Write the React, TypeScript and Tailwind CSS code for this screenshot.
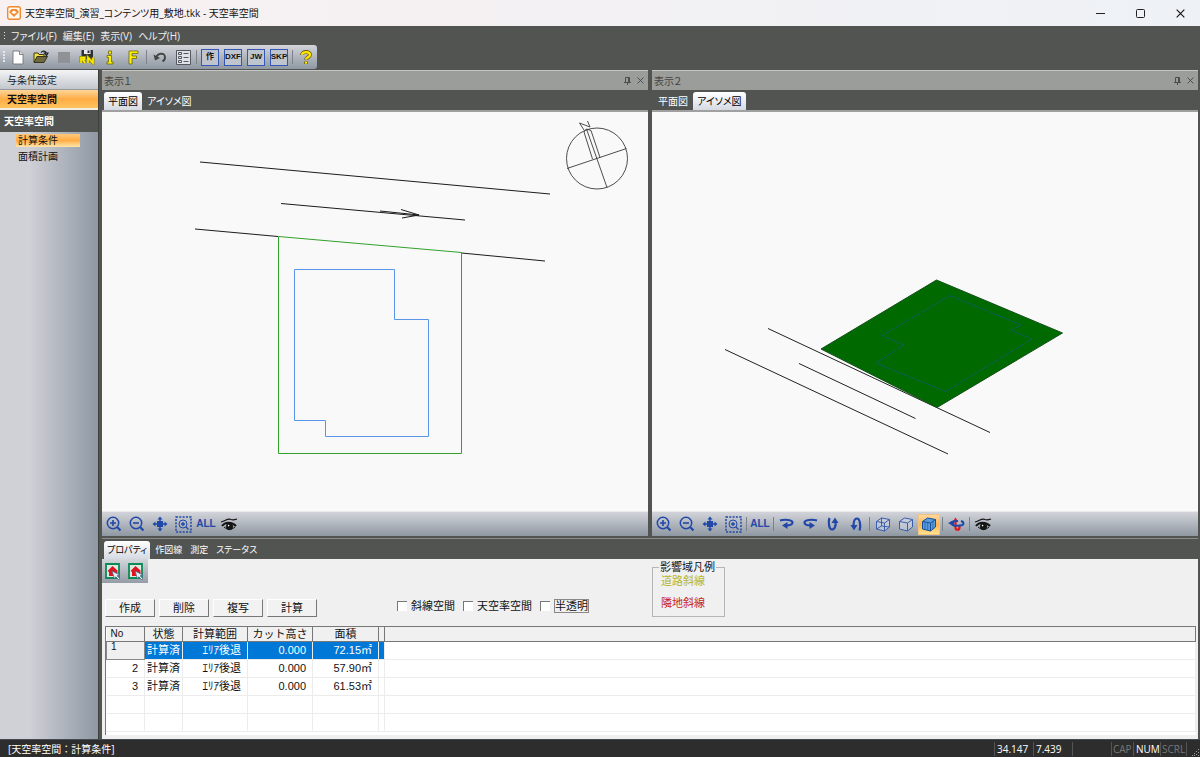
import React, { useState } from 'react';

interface ToolButtonProps {
  label: string;
  active?: boolean;
  disabled?: boolean;
  children: React.ReactNode;
}

const ToolButton: React.FC<ToolButtonProps> = ({ label, active, disabled, children }) => (
  <button
    type="button"
    aria-label={label}
    title={label}
    disabled={disabled}
    className={`flex h-[21px] w-[22px] shrink-0 items-center justify-center ${
      active ? 'border border-[#f3c27c] bg-linear-to-b from-[#ffd9a0] via-[#ffb24d] to-[#ffe38f]' : ''
    }`}
  >
    {children}
  </button>
);

const Separator = () => <span className="mx-px h-[14px] w-px shrink-0 bg-[#7d828a]" />;

const Grip = () => (
  <svg className="shrink-0" width="4" height="14" viewBox="0 0 4 14" fill="#e4e6ea">
    <path d="M1 1h2v2H1zM1 4h2v2H1zM1 7h2v2H1zM1 10h2v2H1z" />
  </svg>
);

/* ---------- icons ---------- */

const AppIcon = () => (
  <svg width="14" height="14" viewBox="0 0 14 14">
    <rect x="0.7" y="0.7" width="12.6" height="12.6" rx="2" fill="#fff8f0" stroke="#f08a2c" strokeWidth="1.4" />
    <path d="M2 6l2.5-3h5L12 6l-5 5z" fill="#f08a2c" />
    <path d="M4.2 6.3L7 4.6l2.8 1.7L7 8.2z" fill="#fff8f0" />
  </svg>
);

const NewIcon = () => (
  <svg width="12" height="15" viewBox="0 0 12 15">
    <path d="M1 1h6.5L11 4.5V14H1z" fill="#fff" stroke="#777" strokeWidth="0.9" />
    <path d="M7.5 1v3.5H11" fill="#ddd" stroke="#777" strokeWidth="0.9" />
  </svg>
);

const OpenIcon = () => (
  <svg width="16" height="14" viewBox="0 0 16 14">
    <path d="M1 12V3h4l1 1.5h5V7" fill="#f2e24a" stroke="#3f3a18" />
    <path d="M1 12.5L4 6.5h10.5l-3.5 6z" fill="#6f6840" stroke="#38341c" />
    <path d="M8 2.5C9.500 .5 12.500.5 13.500 3.500M11.500 3h3.500l-1.500 2.500z" fill="none" stroke="#222" strokeWidth="1.2" />
  </svg>
);

const SaveIcon = () => (
  <svg width="17" height="16" viewBox="0 0 17 16">
    <path d="M2.500 1h11.500v9H2.500z" fill="#2f3238" />
    <path d="M5 1h6.500v4H5z" fill="#e8ebee" />
    <path d="M8.500 1.500h2v2.500h-2z" fill="#2f3238" />
    <path d="M2 14V8.500h3.500v2H2M4 11l2 3M9 14V8.500l5 5.500V8.500" fill="none" stroke="#8d8200" strokeWidth="3" />
    <path d="M2 14V8.500h3.500v2H2M4 11l2 3M9 14V8.500l5 5.500V8.500" fill="none" stroke="#fff200" strokeWidth="1.600" />
  </svg>
);

const InfoIcon = () => (
  <svg width="8" height="15" viewBox="0 0 8 15">
    <path d="M2.500 1h3v3h-3zM1 5.500h4.500V12H7v2H1v-2h1.500V7.500H1z" fill="#fff200" stroke="#6b6600" strokeWidth="0.800" />
  </svg>
);

const FrameIcon = () => (
  <svg width="11" height="15" viewBox="0 0 11 15">
    <path d="M1 1h9v2.500H4V6h4.500v2.500H4V14H1z" fill="#fff200" stroke="#6b6600" strokeWidth="0.800" />
  </svg>
);

const UndoIcon = () => (
  <svg width="14" height="12" viewBox="0 0 14 12" fill="none">
    <path d="M3 7C4.500 2 11.500 1 12 6c.2 2-1 3.500-2.500 4.500" stroke="#444" strokeWidth="1.900" />
    <path d="M.5 3.500L2 9.500l5-2.500z" fill="#444" />
  </svg>
);

const ListIcon = () => (
  <svg width="15" height="15" viewBox="0 0 15 15" fill="none" stroke="#55595f">
    <path d="M.5.500h14v14H.500z" fill="#dfe2e6" />
    <path d="M2.500 2.500h3v2h-3zM2.500 6.500h3v2h-3zM2.500 10.500h3v2h-3zM7.500 3.500h5M7.500 7.500h5M7.500 11.500h5" />
  </svg>
);

const HelpIcon = () => (
  <svg width="12" height="15" viewBox="0 0 12 15">
    <path d="M2 5C2 1 10 1 10 4.800 10 7.500 6 7 6 9.800M6 11.600V14" fill="none" stroke="#6b5b00" strokeWidth="3.800" />
    <path d="M2 4.800C2.500 1.200 10 1.200 10 4.800 10 7.500 6 7 6 9.600M6 11.800v2" fill="none" stroke="#ffe600" strokeWidth="2.300" />
  </svg>
);

const BLUE = '#2148a8';

const ZoomIcon = ({ plus = false }: { plus?: boolean }) => (
  <svg width="16" height="16" viewBox="0 0 16 16" fill="none" stroke={BLUE}>
    <circle cx="7" cy="7" r="5.700" strokeWidth="1.500" />
    <path d={plus ? 'M4 7h6M7 4v6' : 'M4 7h6'} strokeWidth="1.600" />
    <path d="M11.300 11.300l3.200 3.200" strokeWidth="2.200" />
  </svg>
);

const PanIcon = () => (
  <svg width="16" height="16" viewBox="0 0 16 16" fill={BLUE}>
    <path d="M5 5h6v6H5zM8 .5l2.500 3h-5zM8 15.500l2.500-3h-5zM.5 8l3-2.500v5zM15.500 8l-3-2.500v5z" />
    <path d="M7.300 3h1.400v10H7.300zM3 7.300h10v1.400H3z" />
  </svg>
);

const ZoomWindowIcon = () => (
  <svg width="17" height="17" viewBox="0 0 17 17" fill="none" stroke={BLUE}>
    <path d="M1 1h15v15H1z" strokeWidth="1.500" strokeDasharray="2 1.300" />
    <circle cx="8" cy="8" r="4" />
    <path d="M6 8h4M8 6v4M11 11l2.500 2.500" strokeWidth="1.300" />
  </svg>
);

const EyeIcon = () => (
  <svg width="18" height="15" viewBox="0 0 18 15" fill="none" stroke="#151515">
    <path d="M1 5C5 4 8 1 11 2.500c2 .8 4 .2 6-.5" strokeWidth="1.200" />
    <path d="M2 9c3-4.500 10-4.500 14 0" strokeWidth="2" />
    <path d="M4 10c3 3 8 3 11 0" />
    <circle cx="9.500" cy="9.500" r="3.200" fill="#151515" />
    <circle cx="8.600" cy="8.600" r=".8" fill="#fff" stroke="none" />
  </svg>
);

const TurnRightIcon = () => (
  <svg width="16" height="12" viewBox="0 0 16 12" fill="none">
    <path d="M1 2.500C6 1 13.500 2 13.500 4.500 13.500 7 9 7.500 6.500 7.500" stroke={BLUE} strokeWidth="2.200" />
    <path d="M8.500 4v7L3 7.500z" fill={BLUE} />
  </svg>
);

const TurnLeftIcon = () => (
  <svg width="16" height="12" viewBox="0 0 16 12" fill="none">
    <path d="M15 2.500C10 1 2.500 2 2.500 4.500 2.500 7 6 7.500 9 7.500" stroke={BLUE} strokeWidth="2.200" />
    <path d="M7.500 4v7L13 7.500z" fill={BLUE} />
  </svg>
);

const TurnDownIcon = () => (
  <svg width="12" height="16" viewBox="0 0 12 16" fill="none">
    <path d="M2.500 2C1 6 2 13.500 5 13.500S9 9 8.500 6" stroke={BLUE} strokeWidth="2.200" />
    <path d="M4.500 7h7L8 1.500z" fill={BLUE} />
  </svg>
);

const TurnUpIcon = () => (
  <svg width="12" height="16" viewBox="0 0 12 16" fill="none">
    <path d="M9.500 14.500C11 10 10 2.500 7 2.500S3.500 6 3.500 10" stroke={BLUE} strokeWidth="2.200" />
    <path d="M.5 9h7L4 14.500z" fill={BLUE} />
  </svg>
);

const CubeIcon = ({ kind }: { kind: 'wire' | 'hidden' | 'solid' }) => (
  <svg width="16" height="15" viewBox="0 0 16 15" strokeLinejoin="round" stroke={kind === 'solid' ? '#174f96' : '#3a5eae'}>
    <path d="M1.500 4.500L6.500 1l8 1.500v7.500L9.500 14l-8-2z" fill={kind === 'solid' ? '#5a9ce0' : '#d5dcec'} fillOpacity={kind === 'solid' ? 1 : 0.5} />
    <path d="M1.500 4.500l8 1.500 5-3.500M9.500 6v8" fill="none" />
    {kind === 'wire' && <path d="M6.500 1v8l8 1M6.500 9l-5 3" fill="none" />}
    {kind === 'solid' && <path d="M4 5v7M6.700 5.500v7.500M12 4.500V12" fill="none" strokeWidth=".6" />}
  </svg>
);

const AxisIcon = () => (
  <svg width="17" height="15" viewBox="0 0 17 15" fill="none">
    <path d="M7.500 3.500v7c0 3 4 3 4 0V8.500" stroke="#e01818" strokeWidth="2.200" />
    <path d="M5 4.500h5L7.500.500z" fill="#e01818" />
    <path d="M13 4C16 5 17 8 12 8.500 8 9 5 8.500 4 7.500M2.500 6C4 4.500 7 4 10 4" stroke={BLUE} strokeWidth="1.900" />
    <path d="M0 6l6-2.500v6z" fill={BLUE} />
  </svg>
);

const PickIcon = () => (
  <svg width="16" height="17" viewBox="0 0 16 17">
    <path d="M1 1h13v14H1z" fill="#dcebe2" stroke="#0d8a55" strokeWidth="1.800" />
    <path d="M2.500 8L7.500 3l5 4.500v4L8 13H4V9z" fill="#e01420" />
    <path d="M7 8l8 4-3 .8 3 2.700-1.300 1.300-3-3L9.500 16z" fill="#e6edf7" stroke="#4a6487" strokeWidth=".8" />
  </svg>
);

const PinIcon = () => (
  <svg width="7" height="8" viewBox="0 0 7 8" fill="none" stroke="#4d4d4d">
    <path d="M1.500 5V.500h4V5M0 5.500h7M3.500 5.500V8M4.500 1v4" />
  </svg>
);

const CloseIcon = ({ size }: { size: number }) => (
  <svg width={size} height={size} viewBox="0 0 8 8" fill="none" stroke="currentColor">
    <path d="M.6.600l6.800 6.800M7.400.600L.6 7.400" />
  </svg>
);

/* ---------- drawings ---------- */

const PlanDrawing = () => (
  <svg className="min-h-0 w-full flex-1 bg-[#f9f9f9]" viewBox="102 112 546 399" fill="none" stroke="#1c1c1c" strokeWidth="1">
    <path d="M200 162L550 194M195 229L278 236.500M461.500 253L545 261M281 203.500L465 220" />
    <path d="M380 211L419 215L401 209.500M419 215L402 218" />
    <path d="M278.500 236.500L461.500 252.500V453.500H278.500Z" stroke="#33a02c" />
    <path d="M294.500 269.500H394.500V319.500H428.500V436.500H325.500V420.500H294.500Z" stroke="#5a96e8" />
    <g strokeWidth="0.900" stroke="#3a3a3a">
      <circle cx="597" cy="158.500" r="30.500" />
      <path d="M567 168.500L626.500 148.500M586.500 129L607 187.500" />
      <path d="M584 132L592.500 159M591 130.500L600 157.500M584 132L586.500 129L591 130.500" />
      <path d="M584 130L579.500 123L590 127L587.500 121" />
    </g>
  </svg>
);

const IsoDrawing = () => (
  <svg className="min-h-0 w-full flex-1 bg-[#f9f9f9]" viewBox="652 112 546 399" fill="none" stroke="#222" strokeWidth="1">
    <path d="M768 328.500L990 432.500M725 349.500L948 454M799 363.500L915.500 418.500" />
    <path d="M936.500 280L1062.500 333L937 407.500L821 349Z" fill="#006a00" stroke="#12501a" />
    <path
      d="M950 295.500L1021 325L1011 330.500L1032 339L945.500 391.500L876 363L904 345L882 335.500Z"
      stroke="#14577a"
      strokeWidth="0.800"
      strokeDasharray="5 1"
    />
  </svg>
);

/* ---------- panes ---------- */

const TextIcon = ({ children }: { children: React.ReactNode }) => (
  <span className="font-['Liberation_Sans',sans-serif] text-[10px] font-bold text-[#2148a8]">{children}</span>
);

const BoxIcon = ({ children }: { children: React.ReactNode }) => (
  <span className="flex h-[17px] w-[18px] items-center justify-center border border-[#3457b5] bg-[#bfc5cf] font-['Liberation_Sans','Noto_Sans_CJK_JP',sans-serif] text-[8px] font-bold text-[#111]">
    {children}
  </span>
);

const ViewTools = ({ iso = false }: { iso?: boolean }) => (
  <div className="flex h-[25px] shrink-0 items-center gap-px border-t border-[#e8eaed] bg-linear-to-b from-[#d3d4da] to-[#8f98a2] pl-px">
    <ToolButton label="拡大"><ZoomIcon plus /></ToolButton>
    <ToolButton label="縮小"><ZoomIcon /></ToolButton>
    <ToolButton label="移動"><PanIcon /></ToolButton>
    <ToolButton label="範囲拡大"><ZoomWindowIcon /></ToolButton>
    {iso && <Separator />}
    <ToolButton label="全体"><TextIcon>ALL</TextIcon></ToolButton>
    {iso && (
      <>
        <Separator />
        <ToolButton label="右回転"><TurnRightIcon /></ToolButton>
        <ToolButton label="左回転"><TurnLeftIcon /></ToolButton>
        <ToolButton label="下回転"><TurnDownIcon /></ToolButton>
        <ToolButton label="上回転"><TurnUpIcon /></ToolButton>
        <Separator />
        <ToolButton label="ワイヤー"><CubeIcon kind="wire" /></ToolButton>
        <ToolButton label="隠線"><CubeIcon kind="hidden" /></ToolButton>
        <ToolButton label="面" active><CubeIcon kind="solid" /></ToolButton>
        <Separator />
        <ToolButton label="回転"><AxisIcon /></ToolButton>
        <Separator />
      </>
    )}
    <ToolButton label="表示設定"><EyeIcon /></ToolButton>
  </div>
);

interface TabsProps {
  items: string[];
  active: string;
  small?: boolean;
}

const Tabs: React.FC<TabsProps> = ({ items, active, small }) => (
  <div
    role="tablist"
    className={`flex h-[20px] shrink-0 items-end bg-[#525452] pl-[2px] ${small ? 'gap-0.5 text-[9px]' : 'gap-px'}`}
  >
    {items.map((item) => (
      <button
        key={item}
        type="button"
        role="tab"
        aria-selected={item === active}
        className={`h-[18px] rounded-t-[3px] ${small ? 'px-[3px]' : 'px-1'} ${
          item === active ? 'bg-linear-to-b from-white to-[#d5dae3] text-black' : 'text-white'
        }`}
      >
        {item}
      </button>
    ))}
  </div>
);

interface PaneProps {
  title: string;
  tab: string;
  iso?: boolean;
}

const Pane: React.FC<PaneProps> = ({ title, tab, iso }) => (
  <section className="flex min-h-0 min-w-0 flex-1 flex-col">
    <header className="flex h-[20px] shrink-0 items-center border-t border-[#c4c6c4] bg-[#9b9d9b] pr-1 pl-0.5 text-[#444]">
      <h2 className="flex-1">{title}</h2>
      <button type="button" aria-label="固定" className="mr-1.5"><PinIcon /></button>
      <button type="button" aria-label="閉じる"><CloseIcon size={7} /></button>
    </header>
    <Tabs items={['平面図', 'アイソメ図']} active={tab} />
    <div className="h-0.5 shrink-0 bg-[#a0a0a0]" />
    {iso ? <IsoDrawing /> : <PlanDrawing />}
    <ViewTools iso={iso} />
  </section>
);

/* ---------- properties ---------- */

const rows = [
  { no: 1, state: '計算済', range: 'ｴﾘｱ後退', cut: '0.000', area: '72.15㎡' },
  { no: 2, state: '計算済', range: 'ｴﾘｱ後退', cut: '0.000', area: '57.90㎡' },
  { no: 3, state: '計算済', range: 'ｴﾘｱ後退', cut: '0.000', area: '61.53㎡' },
];

const ResultTable = () => {
  const th = 'h-[14px] border-r border-b border-[#777] bg-[#f0f0f0] p-0 font-normal';
  const td = 'h-[18px] border-r border-b border-[#ececec] p-0';
  return (
    <table className="w-full table-fixed border-collapse bg-white leading-[12px]">
      <colgroup>
        <col className="w-[38px]" />
        <col className="w-[38px]" />
        <col className="w-[65px]" />
        <col className="w-[65px]" />
        <col className="w-[66px]" />
        <col className="w-[6px]" />
        <col />
      </colgroup>
      <thead>
        <tr>
          <th className={`${th} pl-1 text-left text-[10px]`}>No</th>
          <th className={th}>状態</th>
          <th className={th}>計算範囲</th>
          <th className={th}>カット高さ</th>
          <th className={th}>面積</th>
          <th className={th} />
          <th className={th} />
        </tr>
      </thead>
      <tbody>
        {rows.map((row) => {
          const cell = row.no === 1 ? `${td} bg-[#0078d7] text-white` : td;
          return (
            <tr key={row.no}>
              <td className={row.no === 1 ? 'h-[18px] border border-[#888] bg-[#f0f0f0] pl-1 align-top text-[10px] leading-none' : `${td} pr-1.5 text-right`}>
                {row.no}
              </td>
              <td className={`${cell} text-center`}>{row.state}</td>
              <td className={`${cell} pr-1.5 text-right`}>{row.range}</td>
              <td className={`${cell} pr-1.5 text-right`}>{row.cut}</td>
              <td className={`${cell} pr-1.5 text-right`}>{row.area}</td>
              <td className={cell} />
              <td className={td} />
            </tr>
          );
        })}
        {[0, 1].map((i) => (
          <tr key={i}>
            {[0, 1, 2, 3, 4, 5, 6].map((c) => (
              <td key={c} className={td} />
            ))}
          </tr>
        ))}
      </tbody>
    </table>
  );
};

const Properties = () => {
  const [checked, setChecked] = useState<Record<string, boolean>>({});

  return (
    <section className="shrink-0">
      <Tabs items={['プロパティ', '作図線', '測定', 'ステータス']} active="プロパティ" small />
      <div className="bg-[#f0f0f0] pr-0.5 pb-1 pl-[3px] font-['Liberation_Sans','Noto_Sans_CJK_JP',sans-serif] text-[11px] [font-feature-settings:normal]">
        <div className="flex h-[67px]">
          <div className="flex w-[547px] shrink-0 flex-col justify-between pb-[9px]">
            <div className="-ml-[3px] flex h-6 w-[46px] items-center gap-px bg-linear-to-b from-[#d3d7dc] to-[#969ca6]">
              <ToolButton label="選択"><PickIcon /></ToolButton>
              <ToolButton label="範囲選択"><PickIcon /></ToolButton>
            </div>
            <div className="flex items-center gap-1">
              {['作成', '削除', '複写', '計算'].map((label) => (
                <button
                  key={label}
                  type="button"
                  className="h-[18px] w-[50px] border border-t-white border-r-[#777] border-b-[#777] border-l-white bg-[#f2f2f2] leading-4"
                >
                  {label}
                </button>
              ))}
              <div className="mb-1 ml-[76px] flex gap-2">
                {['斜線空間', '天空率空間', '半透明'].map((label) => (
                  <label key={label} className="flex items-center gap-1">
                    <input
                      type="checkbox"
                      checked={!!checked[label]}
                      onChange={(e) => setChecked({ ...checked, [label]: e.target.checked })}
                      className="h-[10px] w-[10px] appearance-none border-t border-l border-[#777] bg-white checked:bg-[#0078d7]"
                    />
                    <span className={label === '半透明' ? 'border border-[#888] leading-[12px]' : 'leading-[12px]'}>{label}</span>
                  </label>
                ))}
              </div>
            </div>
          </div>
          <fieldset className="mt-[3px] h-[55px] w-[73px] shrink-0 border border-[#b5b5b5] pt-0.5 pl-2 leading-[14px]">
            <legend className="-ml-0.5 px-px leading-[10px]">影響域凡例</legend>
            <p className="text-[#b5b52a]">道路斜線</p>
            <p className="mt-2 text-[#c81e1e]">隣地斜線</p>
          </fieldset>
        </div>
        <div className="min-h-[109px] border-t border-l border-[#777] bg-white">
          <ResultTable />
        </div>
      </div>
    </section>
  );
};

/* ---------- window ---------- */

const Sidebar = () => (
  <nav className="w-[98px] shrink-0 bg-linear-to-r from-[#d0d0d7] from-30% to-[#8e99a3]">
    <button type="button" className="block h-5 w-full border-b border-[#999] bg-linear-to-b from-[#f4f4f6] to-[#c3c7cd] pl-[7px] text-left text-[#222]">
      与条件設定
    </button>
    <button type="button" className="block h-5 w-full border-b-2 border-[#f4eee2] bg-linear-to-b from-[#ffd597] via-[#ffad43] to-[#ffc35e] pl-[7px] text-left font-bold">
      天空率空間
    </button>
    <h2 className="h-[22px] bg-[#525452] pl-1 leading-[22px] font-bold text-white">天空率空間</h2>
    <ul className="pt-0.5 pl-4 leading-[14px]">
      <li>
        <a href="#condition" className="block h-[13px] w-[64px] bg-linear-to-b from-[#ffc87a] via-[#ffad43] to-[#ffe7a8] pl-0.5 leading-[13px]">
          計算条件
        </a>
      </li>
      <li className="mt-0.5">
        <a href="#area" className="block pl-0.5">面積計画</a>
      </li>
    </ul>
  </nav>
);

const StatusBar = () => (
  <footer className="flex h-[18px] shrink-0 items-center border-t border-[#444a54] bg-[#2d2d2d] pl-2 text-[10px] text-white">
    <span className="flex-1 [font-feature-settings:normal]">[天空率空間：計算条件]</span>
    <div className="flex leading-[14px]">
      <span className="w-[39px] border-l border-[#555] pl-0.5">34.147</span>
      <span className="w-[39px] border-l border-[#555] pl-0.5">7.439</span>
      <span className="w-[39px] border-l border-[#555]" />
      <span className="w-[22px] border-l border-[#555] pl-px text-[#777]">CAP</span>
      <span className="w-[27px] border-l border-[#555] pl-0.5">NUM</span>
      <span className="w-[27px] border-x border-[#555] pl-px text-[#777]">SCRL</span>
    </div>
    <svg className="ml-1 self-end" width="9" height="9" viewBox="0 0 9 9" fill="#999">
      <path d="M7 1h1v1H7zM5 3h1v1H5zM7 4h1v1H7zM3 5h1v1H3zM5 6h1v1H5zM7 7h1v1H7zM1 7h1v1H1zM3 7h1v1H3z" />
    </svg>
  </footer>
);

const App: React.FC = () => (
  <div className="flex h-screen flex-col bg-[#525452] font-['Open_Sans','Noto_Sans_CJK_JP',sans-serif] text-[10px] leading-4 text-[#111] [font-feature-settings:'palt']">
    <header className="flex h-[26px] shrink-0 items-center bg-linear-to-r from-[#f8f0f1] to-[#eef2f6] pl-[7px]">
      <AppIcon />
      <h1 className="flex-1 pl-1">天空率空間_演習_コンテンツ用_敷地.tkk - 天空率空間</h1>
      <button type="button" aria-label="最小化" className="flex w-10 justify-center">
        <svg width="9" height="9" viewBox="0 0 9 9" stroke="#222"><path d="M0 4.500h9" /></svg>
      </button>
      <button type="button" aria-label="最大化" className="flex w-10 justify-center">
        <svg width="9" height="9" viewBox="0 0 9 9" fill="none" stroke="#222"><rect x=".5" y=".5" width="8" height="8" rx="1" /></svg>
      </button>
      <button type="button" aria-label="終了" className="flex w-10 justify-center"><CloseIcon size={9} /></button>
    </header>

    <div className="flex h-[19px] shrink-0 items-center pl-[3px] text-[#eee]">
      <svg width="4" height="8" viewBox="0 0 4 8" fill="#ddd"><path d="M1 0h1v1H1zM1 3h1v1H1zM1 6h1v1H1z" /></svg>
      <div className="flex gap-1.5 pl-1">
        {['ファイル(F)', '編集(E)', '表示(V)', 'ヘルプ(H)'].map((item) => (
          <button key={item} type="button">{item}</button>
        ))}
      </div>
    </div>

    <div className="flex h-6 w-[317px] shrink-0 items-center gap-px rounded-r-[3px] bg-linear-to-b from-[#d3d4da] to-[#8f98a2] pl-[2px]">
      <Grip />
      <ToolButton label="新規"><NewIcon /></ToolButton>
      <ToolButton label="開く"><OpenIcon /></ToolButton>
      <ToolButton label="保存" disabled><span className="h-[11px] w-3 bg-[#909296]" /></ToolButton>
      <ToolButton label="名前を付けて保存"><SaveIcon /></ToolButton>
      <ToolButton label="情報"><InfoIcon /></ToolButton>
      <ToolButton label="書式"><FrameIcon /></ToolButton>
      <Separator />
      <ToolButton label="元に戻す"><UndoIcon /></ToolButton>
      <ToolButton label="設定"><ListIcon /></ToolButton>
      <Separator />
      <ToolButton label="作成"><BoxIcon>作</BoxIcon></ToolButton>
      <ToolButton label="DXF"><BoxIcon>DXF</BoxIcon></ToolButton>
      <ToolButton label="JW"><BoxIcon>JW</BoxIcon></ToolButton>
      <ToolButton label="SKP"><BoxIcon>SKP</BoxIcon></ToolButton>
      <Separator />
      <ToolButton label="ヘルプ"><HelpIcon /></ToolButton>
    </div>

    <div className="mt-px flex min-h-0 flex-1">
      <Sidebar />
      <main className="flex min-w-0 flex-1 flex-col border-l border-[#3e403e] pr-0.5 pl-[3px]">
        <div className="flex min-h-0 flex-1 gap-1">
          <Pane title="表示１" tab="平面図" />
          <Pane title="表示２" tab="アイソメ図" iso />
        </div>
        <div className="h-[3px] shrink-0 border-b border-[#8a8c8a]" />
        <Properties />
      </main>
    </div>
    <StatusBar />
  </div>
);

export default App;
